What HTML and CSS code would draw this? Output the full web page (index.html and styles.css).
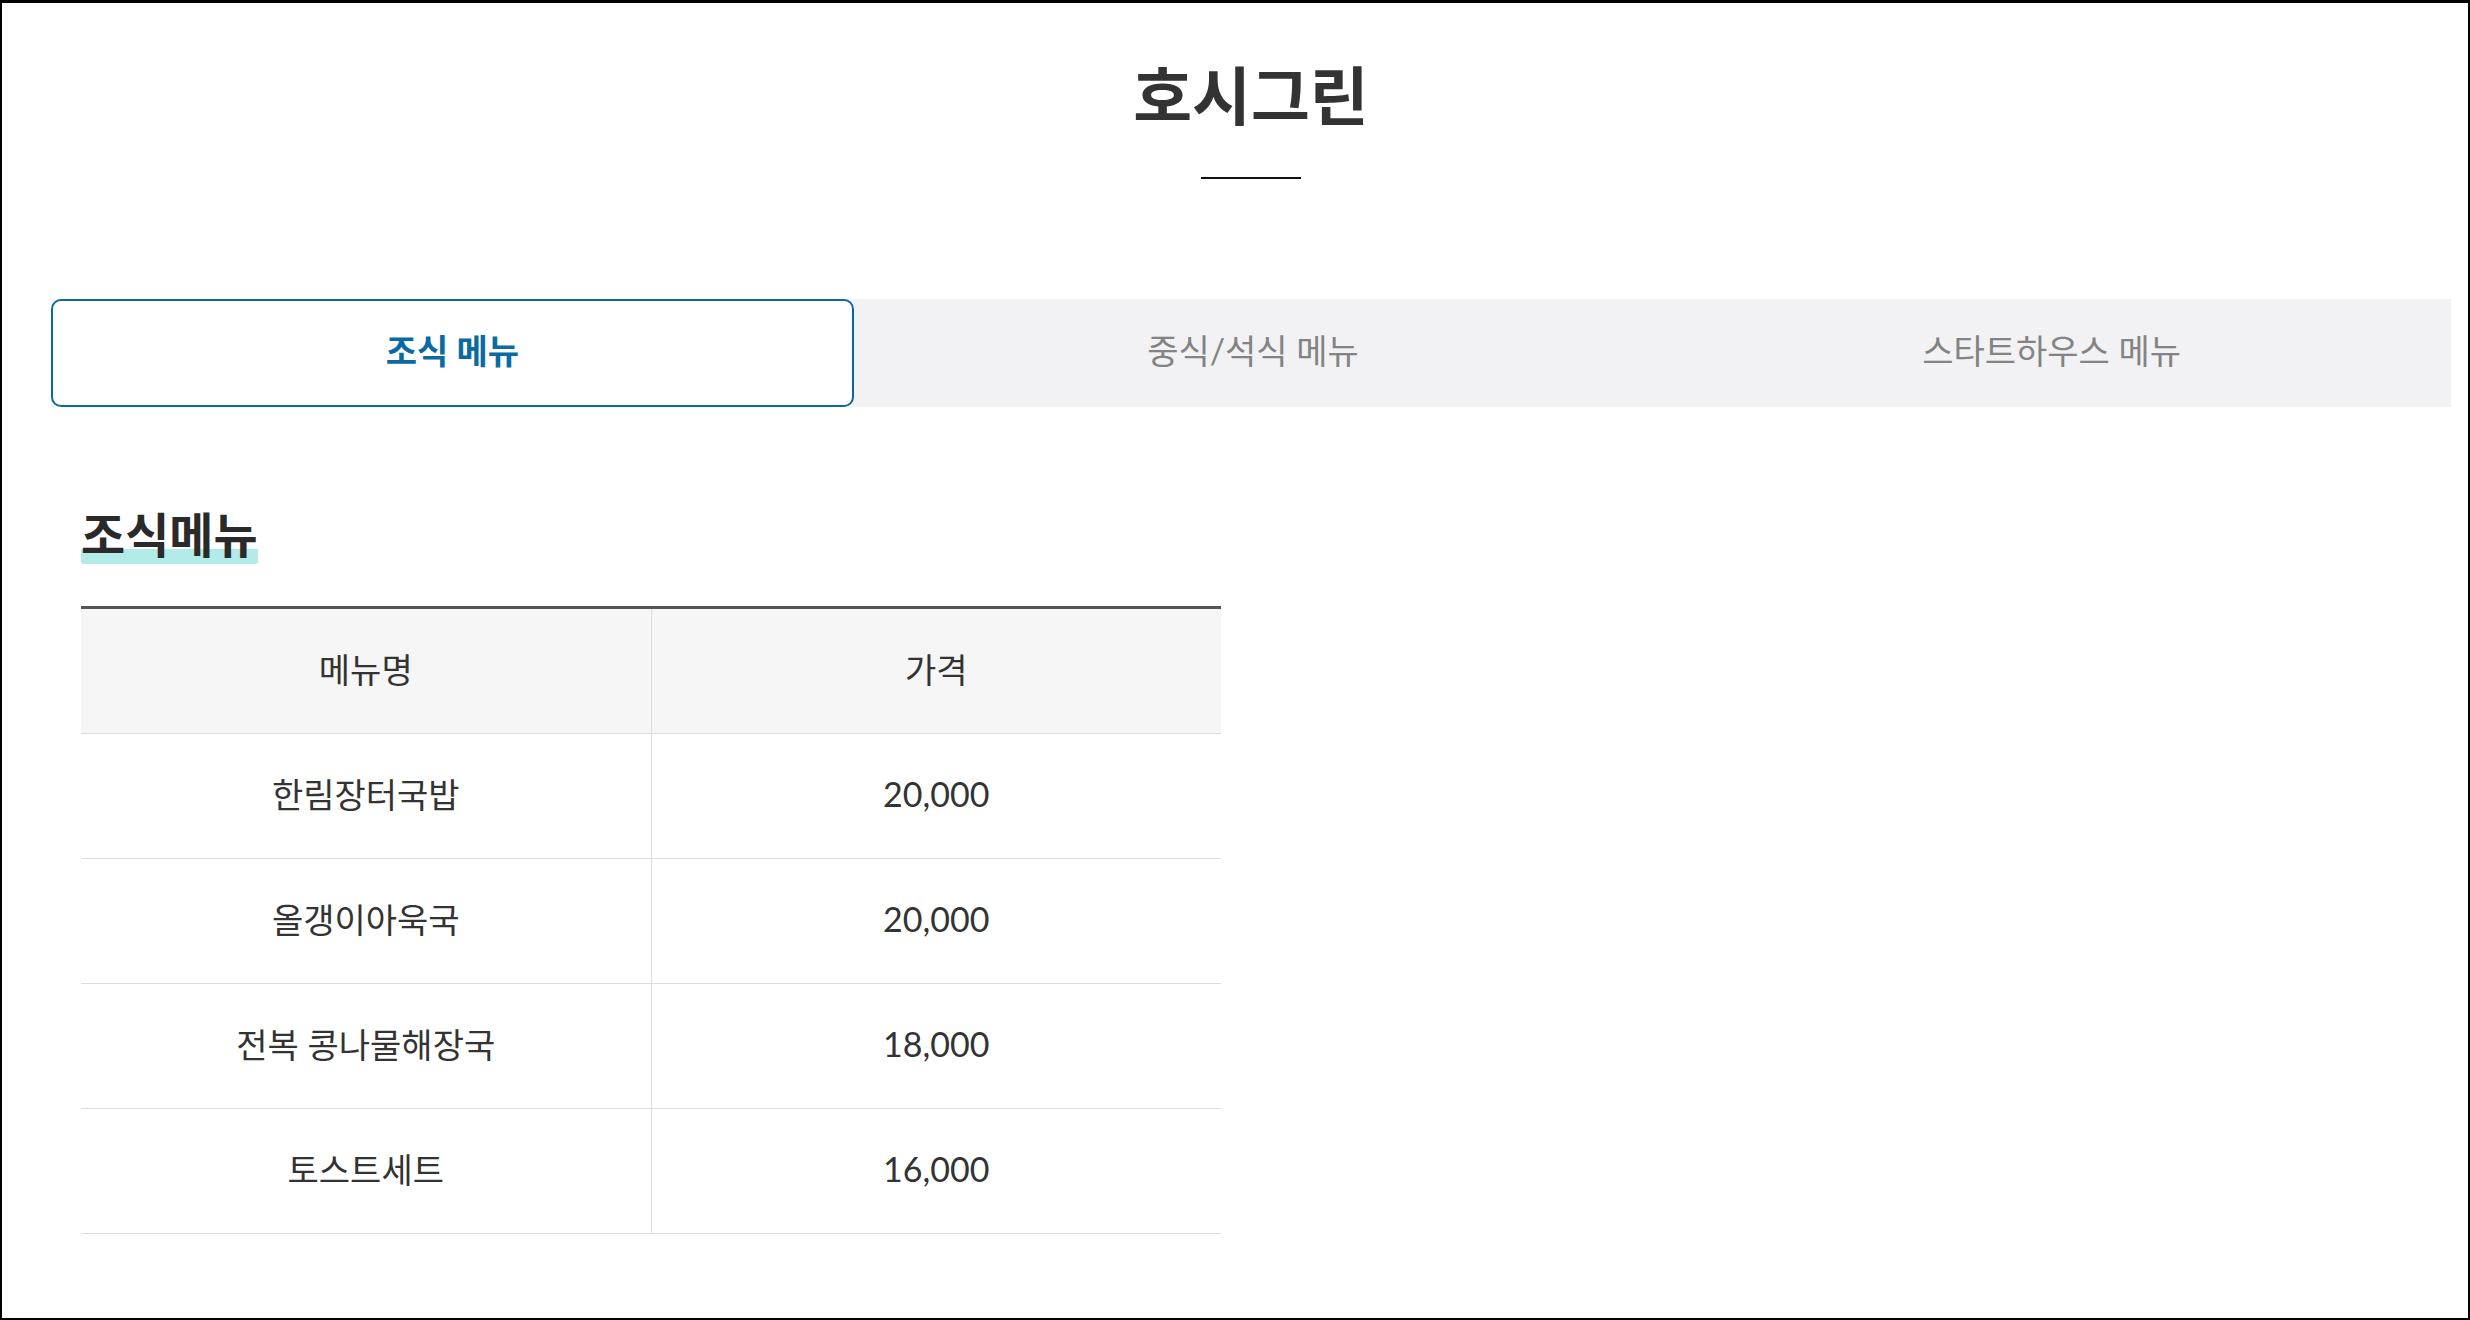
FILE: index.html
```html
<!DOCTYPE html>
<html lang="ko">
<head>
    <meta charset="UTF-8">
    <meta name="viewport" content="width=device-width, initial-scale=1.0">
    <title>호시그린</title>
    <link rel="stylesheet" href="styles.css">
</head>
<body>

    <div class="frame">
        <div class="wrap">
            <div class="title-area">
                <h1>호시그린</h1>
                <div class="title-line"></div>
            </div>

            <ul class="tabs">
                <li class="tab active">조식 메뉴</li>
                <li class="tab">중식/석식 메뉴</li>
                <li class="tab">스타트하우스 메뉴</li>
            </ul>

            <div class="menu-section">
                <h2><span>조식메뉴</span></h2>
                <table class="menu-table">
                    <thead>
                        <tr>
                            <th>메뉴명</th>
                            <th>가격</th>
                        </tr>
                    </thead>
                    <tbody>
                        <tr>
                            <td>한림장터국밥</td>
                            <td>20,000</td>
                        </tr>
                        <tr>
                            <td>올갱이아욱국</td>
                            <td>20,000</td>
                        </tr>
                        <tr>
                            <td>전복 콩나물해장국</td>
                            <td>18,000</td>
                        </tr>
                        <tr>
                            <td>토스트세트</td>
                            <td>16,000</td>
                        </tr>
                    </tbody>
                </table>
            </div>
        </div>
    </div>

</body>
</html>
```

FILE: styles.css
```css
html, body {
    margin: 0;
    padding: 0;
    background: #fff;
}
body {
    font-family: Lato, "Noto Sans CJK KR", sans-serif;
    color: #333;
}
.frame {
    box-sizing: border-box;
    height: 1320px;
    border: 2px solid #000;
    border-top-width: 3px;
    overflow: hidden;
}
.wrap {
    width: 2400px;
    margin-left: 49px;
}
.title-area {
    text-align: center;
    padding-top: 57px;
}
h1 {
    margin: 0;
    font-size: 64px;
    line-height: 72px;
    font-weight: 700;
    color: #333;
}
.title-line {
    width: 100px;
    height: 2px;
    background: #111;
    margin: 45px auto 0;
}
.tabs {
    list-style: none;
    margin: 120px 0 0;
    padding: 0;
    display: flex;
    height: 108px;
    background: #f2f2f4;
}
.tab {
    flex: 1;
    display: flex;
    align-items: center;
    justify-content: center;
    padding-bottom: 8px;
    font-size: 34px;
    color: #838383;
    cursor: pointer;
}
.tab.active {
    background: #fff;
    border: 2px solid #0b6a9c;
    border-radius: 10px;
    color: #0b6aa1;
    font-weight: 700;
}
.menu-section {
    padding-left: 30px;
}
h2 {
    margin: 98px 0 0;
    font-size: 48px;
    line-height: 59px;
    font-weight: 700;
    color: #2a2a2a;
}
h2 span {
    display: inline-block;
    background: linear-gradient(to bottom, transparent calc(100% - 15px), #b2ebe7 calc(100% - 15px));
    border-radius: 3px;
}
.menu-table {
    margin-top: 42px;
    width: 1140px;
    border-collapse: collapse;
    border-top: 3px solid #555;
    font-size: 34px;
    color: #333;
}
.menu-table th,
.menu-table td {
    width: 50%;
    height: 118px;
    padding: 0 0 6px;
    text-align: center;
    font-weight: 400;
    border-bottom: 1px solid #ddd;
}
.menu-table th {
    background: #f6f6f6;
}
.menu-table th + th,
.menu-table td + td {
    border-left: 1px solid #ddd;
}
```
